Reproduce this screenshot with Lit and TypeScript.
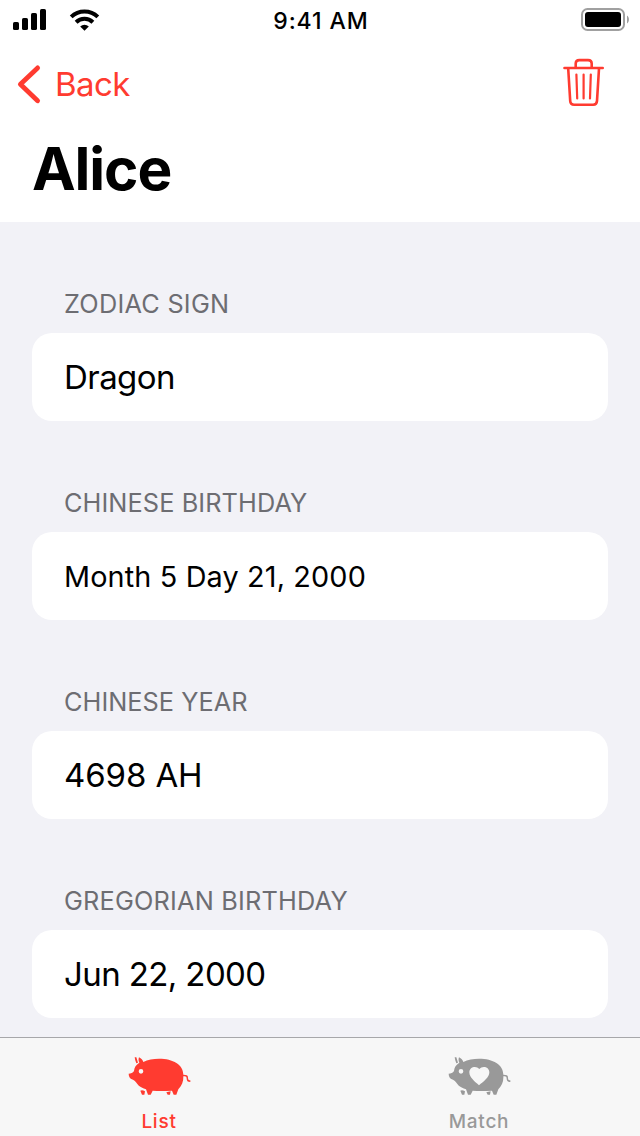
import { LitElement, html, css, svg } from "lit";
import { customElement, property } from "lit/decorators.js";

@customElement("status-bar")
class StatusBar extends LitElement {
  static styles = css`
    :host { display: grid; grid-template-columns: 1fr auto 1fr; align-items: center; height: 40px; padding: 0 10px 0 12px; color: #000; }
    svg { display: block; }
    .end { justify-self: end; }
    .time { font-size: 23px; font-weight: 500; letter-spacing: 0.95px; line-height: 40px; padding-top: 1px; box-sizing: border-box; height: 40px; }
  `;
  render() {
    return html`
      <svg width="90" height="40" viewBox="12 0 90 40">
        <rect x="13" y="22" width="6" height="8" rx="1.6" />
        <rect x="22" y="18" width="6" height="12" rx="1.6" />
        <rect x="31" y="13" width="6" height="17" rx="1.6" />
        <rect x="40" y="9" width="6" height="21" rx="1.6" />
        <g fill="none" stroke="#000" stroke-width="4">
          <path d="M71.2 16.9a19.2 19.2 0 0 1 26.6 0" />
          <path d="M76.1 22.3a12 12 0 0 1 16.8 0" />
        </g>
        <path d="M84.5 30.8l-4.3-4.3a6.2 6.2 0 0 1 8.6 0z" />
      </svg>
      <div class="time">9:41 AM</div>
      <svg class="end" width="50" height="40" viewBox="580 0 50 40">
        <rect x="582" y="9" width="42" height="21" rx="5.5" fill="none" stroke="#a0a0a0" stroke-width="2" />
        <rect x="585" y="12" width="36" height="15" rx="3" />
        <path d="M627 15.5c2.6 1.4 2.6 6.6 0 8z" fill="#a0a0a0" />
      </svg>
    `;
  }
}

@customElement("nav-header")
class NavHeader extends LitElement {
  @property() heading = "";
  static styles = css`
    :host { display: block; height: 182px; }
    .bar { display: flex; justify-content: space-between; align-items: center; height: 88px; padding: 0 34px 0 16px; }
    .back { display: flex; align-items: center; color: #ff3b30; font-size: 33px; letter-spacing: -0.6px; gap: 13px; }
    svg { display: block; fill: none; stroke: #ff3b30; stroke-linecap: round; stroke-linejoin: round; }
    h1 { margin: 0; padding-left: 32px; font-size: 58.5px; line-height: 82px; font-weight: 700; letter-spacing: -1.1px; color: #000; }
  `;
  render() {
    return html`
      <div class="bar">
        <div class="back">
          <svg width="26" height="44" viewBox="16 62 26 44">
            <path d="M37.6 67.9L20.4 84.3L37.6 100.8" stroke-width="4.8" />
          </svg>
          <span>Back</span>
        </div>
        <svg width="44" height="54" viewBox="562 57 44 54" stroke-width="2.6">
          <path d="M564.5 68h38.2" />
          <path d="M575.7 67.5v-4q0-3.4 3.6-3.4h8.8q3.6 0 3.6 3.4v4" />
          <path d="M568.2 68.5l2 32.4q.2 3.8 4 3.8h19q3.6 0 3.8-3.8l2-32.4" />
          <path d="M576.4 74.5l.8 24M583.6 74.5v24M590.8 74.5l-.8 24" stroke-width="2.2" />
        </svg>
      </div>
      <h1>${this.heading}</h1>
    `;
  }
}

@customElement("detail-section")
class DetailSection extends LitElement {
  @property() label = "";
  @property() value = "";
  @property({ type: Boolean, reflect: true }) compact = false;
  static styles = css`
    :host { display: block; height: 199px; }
    .label { box-sizing: border-box; height: 111px; padding: 66px 0 0 32px; font-size: 25.3px; line-height: 32px; color: #6d6d72; letter-spacing: var(--label-tracking, 0.1px); }
    .card { height: 88px; box-sizing: border-box; padding-left: 32px; background: #fff; border-radius: 20px; line-height: 88px; font-size: 33px; letter-spacing: var(--value-tracking, -0.4px); color: #000; }
    :host([compact]) .card { font-size: 28.8px; line-height: 90px; }
  `;
  render() {
    return html`<div class="label">${this.label}</div><div class="card">${this.value}</div>`;
  }
}

const pigBody =
  "M54 131C60 130 67 129 70 123C71 112 76 104 86 98C83 93 83 87 85 82C92 86 96 90 98 96C111 88 128 86 145 86C187 86 218 104 218 134L225 135C230 135 232 138 232 143C232 149 234 151 239 151L239 156C231 156 228 152 228 146C228 141 226 139 222 139L218 139C219 155 213 168 203 178L197 194L189 194L184 182C165 183 146 184 126 182L120 194L112 194L106 178C94 174 85 169 80 162C75 154 69 150 62 147C57 144 54 139 54 131Z";
const eye = "M84 124a7 7 0 1 0 14 0a7 7 0 1 0 -14 0Z";
const heart =
  "M145 166C133 155 116 143 116 127C116 110 137 106 146 117C155 106 176 110 176 127C176 143 158 155 145 166Z";

@customElement("pig-tab")
class PigTab extends LitElement {
  @property() label = "";
  @property({ type: Boolean, reflect: true }) active = false;
  @property({ type: Boolean }) hearted = false;
  static styles = css`
    :host { display: flex; flex-direction: column; align-items: center; padding-top: 17px; color: #999; }
    :host([active]) { color: #ff3b30; }
    svg { display: block; fill: currentColor; }
    .label { font-size: 19px; font-weight: 500; line-height: 24px; margin-top: 14px; letter-spacing: 0.75px; }
  `;
  render() {
    return html`
      <svg width="65" height="41" viewBox="49 75 195 123">
        ${svg`<path fill-rule="evenodd" d=${pigBody + eye + (this.hearted ? heart : "")} />
        <path d="M72 82L77 82L82 98L77 100Q73 91 72 82ZM89 182Q95 179 103 184L101 194L94 194ZM167 187L180 184L178 194L171 194Z" />`}
      </svg>
      <div class="label">${this.label}</div>
    `;
  }
}

@customElement("app-root")
class AppRoot extends LitElement {
  static styles = css`
    :host { display: flex; flex-direction: column; width: 640px; height: 1136px; overflow: hidden; background: #fff; font-family: Inter, "Liberation Sans", sans-serif; }
    .list { flex: 1; min-height: 0; overflow: hidden; padding: 0 32px; background: #f2f2f7; }
    .zodiac { --label-tracking: 0.25px; --value-tracking: -0.55px; }
    .lunar { --label-tracking: 0.1px; --value-tracking: 0.15px; }
    .year { --label-tracking: 0.05px; --value-tracking: -0.1px; }
    .gregorian { --label-tracking: 0.2px; --value-tracking: -0.6px; }
    .tabs { display: grid; grid-template-columns: 318px 322px; box-sizing: border-box; height: 99px; border-top: 1px solid #a7a7aa; background: #f7f7f7; }
  `;
  render() {
    return html`
      <status-bar></status-bar>
      <nav-header heading="Alice"></nav-header>
      <div class="list">
        <detail-section class="zodiac" label="ZODIAC SIGN" value="Dragon"></detail-section>
        <detail-section class="lunar" compact label="CHINESE BIRTHDAY" value="Month 5 Day 21, 2000"></detail-section>
        <detail-section class="year" label="CHINESE YEAR" value="4698 AH"></detail-section>
        <detail-section class="gregorian" label="GREGORIAN BIRTHDAY" value="Jun 22, 2000"></detail-section>
      </div>
      <div class="tabs">
        <pig-tab active label="List"></pig-tab>
        <pig-tab hearted label="Match"></pig-tab>
      </div>
    `;
  }
}
